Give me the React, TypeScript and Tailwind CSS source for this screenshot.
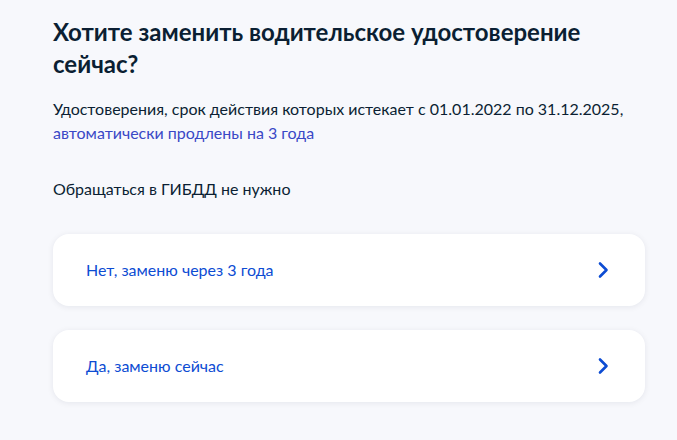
function Chevron() {
  return (
    <svg width="12" height="18" viewBox="0 0 12 18" fill="none">
      <path d="M3 2.5l6.5 6.5-6.5 6.5" stroke="#0d4cd3" strokeWidth="2.6" strokeLinecap="round" strokeLinejoin="round" />
    </svg>
  );
}

function Option({ label }: { label: string }) {
  return (
    <button className="flex items-center justify-between w-full h-[72px] bg-white rounded-2xl pl-[33px] pr-[36px] shadow-[0_1px_6px_rgba(11,31,51,0.08)] text-left">
      <span className="text-[16px] text-[#0d4cd3]">{label}</span>
      <Chevron />
    </button>
  );
}

export default function App() {
  return (
    <div
      className="w-[677px] h-[440px] bg-[#f7f8fc] text-[#0b1f33] overflow-hidden"
      style={{ fontFamily: "Lato, 'Noto Sans', sans-serif" }}
    >
      <div className="pl-[53px] pr-[32px] pt-[16px] w-[677px]">
        {/* Title */}
        <h1 className="text-[24px] font-bold leading-[32px] w-[560px]">
          Хотите заменить водительское удостоверение сейчас?
        </h1>

        <p className="mt-[17px] text-[16px] leading-[24px]">
          Удостоверения, срок действия которых истекает с 01.01.2022 по 31.12.2025,
          <br />
          <span className="text-[#3a48c6]">автоматически продлены на 3 года</span>
        </p>

        <p className="mt-[32px] text-[16px] leading-[24px]">Обращаться в ГИБДД не нужно</p>

        {/* Options */}
        <div className="flex flex-col gap-[24px] mt-[33px] w-[592px]">
          <Option label="Нет, заменю через 3 года" />
          <Option label="Да, заменю сейчас" />
        </div>
      </div>
    </div>
  );
}
